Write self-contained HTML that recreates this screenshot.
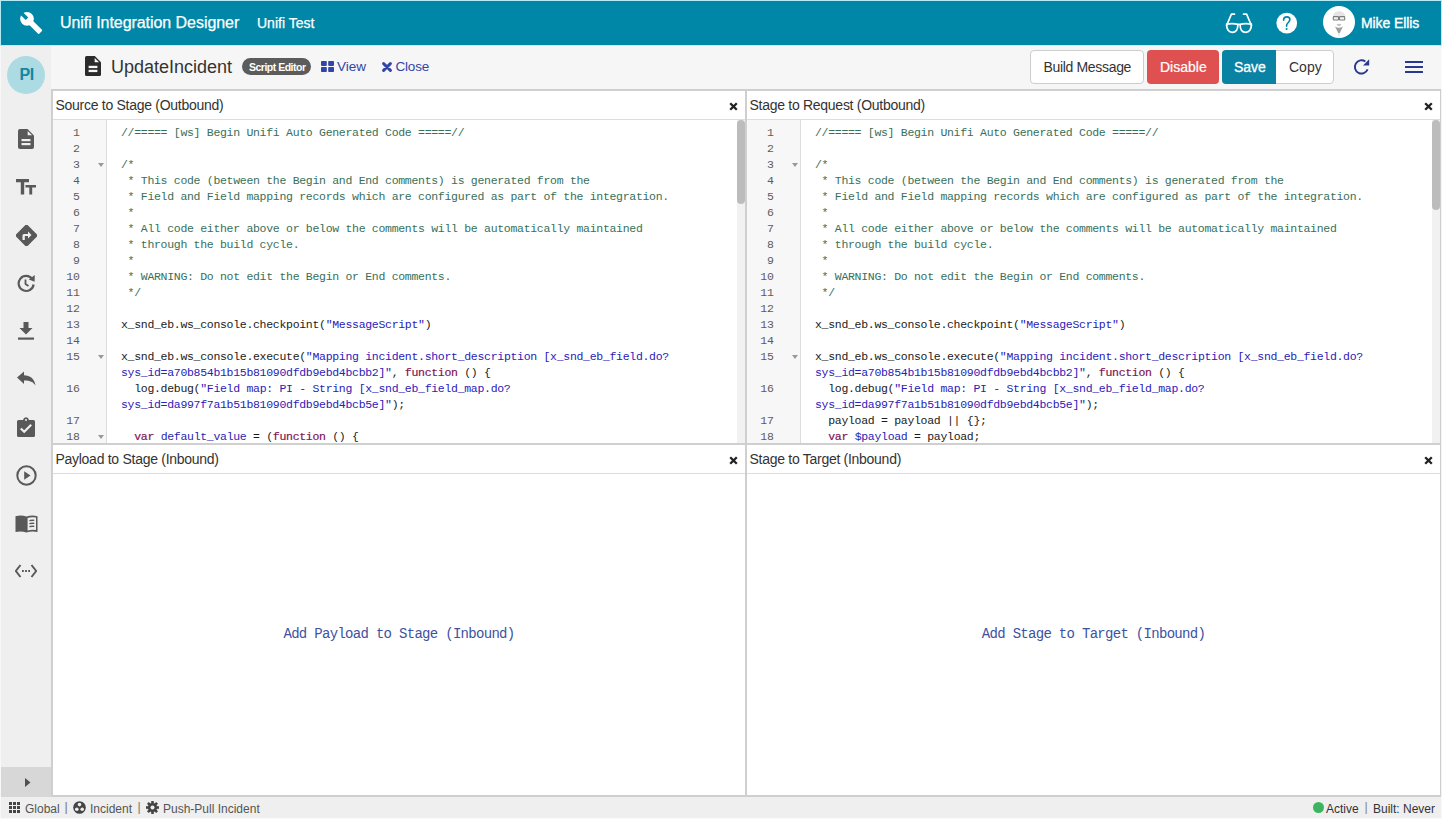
<!DOCTYPE html>
<html><head><meta charset="utf-8"><title>Unifi Integration Designer</title><style>
*{box-sizing:border-box;margin:0;padding:0}
html,body{width:1442px;height:819px;overflow:hidden;background:#f0f0f0;font-family:"Liberation Sans",sans-serif;color:#333;position:relative}
.abs{position:absolute}
.t{position:absolute;white-space:pre}
.hdr{position:absolute;left:0;right:0;top:0;height:29px;border-bottom:1px solid #ddd;font-size:14px;letter-spacing:-0.28px;line-height:29px;padding-left:2.5px;color:#333;white-space:pre}
.x{position:absolute;right:7px;top:10.5px;width:9px;height:9px}
.cm{position:absolute;left:0;right:0;top:29px;bottom:0;overflow:hidden}
.gut{position:absolute;left:0;top:0;bottom:0;width:54px;background:#f7f7f7;border-right:1px solid #ddd}
.lines{position:absolute;left:0;top:5px;right:0;font-family:"Liberation Mono",monospace;font-size:11.5px;letter-spacing:-0.3px;line-height:16px;white-space:pre}
.ln{position:absolute;left:0;width:27px;text-align:right;color:#5c5c5c;letter-spacing:0}
.code{position:absolute;left:68px;color:#1a1a1a}
.fold{position:absolute;left:45px;width:0;height:0;border-left:3px solid transparent;border-right:3px solid transparent;border-top:4px solid #999}
.c{color:#37705a}.s{color:#2b20b8}.k{color:#7f1457;-webkit-text-stroke:0.2px #7f1457}.d{color:#1f1fb0}
.sb{position:absolute;right:0;top:0;bottom:0;width:8px;background:#f1f1f1}
.th{position:absolute;left:0;top:0;width:8px;background:#bcbcbc;border-radius:4px}
.add{text-align:center;font-family:"Liberation Mono",monospace;font-size:14px;letter-spacing:-0.7px;line-height:18px;color:#3d52a0;white-space:pre}
</style></head><body>
<div class="abs" style="left:0;top:0;width:1442px;height:46px;background:#0087a7;box-shadow:inset 1px 1px 0 #b5e9f5, inset -1px 0 0 #b5e9f5, inset 0 -1px 0 #c5ecf5"></div>
<svg class="abs" style="left:16px;top:8px" width="30" height="30" viewBox="0 0 30 30">
<g transform="rotate(45 11 10.8)" fill="#fff">
<circle cx="11" cy="10.8" r="6.9"/>
<rect x="11" y="8.05" width="19.2" height="5.5" rx="0.8"/>
</g>
<g transform="rotate(45 11 10.8)"><rect x="2" y="9" width="9" height="3.6" fill="#0087a7"/></g>
</svg>
<div class="t" style="left:60px;top:15.46px;font-size:16px;line-height:16px;color:#fff;font-weight:400;letter-spacing:-0.05px;-webkit-text-stroke:0.25px #fff;">Unifi Integration Designer</div>
<div class="t" style="left:257px;top:16.15px;font-size:14px;line-height:14px;color:#fff;font-weight:400;letter-spacing:0px;-webkit-text-stroke:0.25px #fff;">Unifi Test</div>
<svg class="abs" style="left:1222px;top:10px" width="34" height="26" viewBox="0 0 34 26">
<g fill="none" stroke="#fff" stroke-width="1.7" stroke-linecap="round" stroke-linejoin="round">
<path d="M4.6 14.2 C4.4 19.6 7 22.3 10.2 22.3 C13.4 22.3 15.9 19.6 15.9 14.4 Q10.3 12.8 4.6 14.2 Z"/>
<path d="M18.1 14.4 C18.1 19.6 20.6 22.3 23.8 22.3 C27 22.3 29.6 19.6 29.4 14.2 Q23.7 12.8 18.1 14.4 Z"/>
<path d="M15.9 14.6 Q17 13.9 18.1 14.6"/>
<path d="M4.6 15.5 L9.4 4.1 L12.5 4.1"/><path d="M29.4 15.5 L24.6 4.1 L21.5 4.1"/>
</g></svg>
<svg class="abs" style="left:1276px;top:12px" width="22" height="22" viewBox="0 0 22 22">
<circle cx="10.75" cy="11.05" r="10.4" fill="#fff"/>
<path d="M7.6 8.3 C7.6 5.9 9.1 4.9 10.9 4.9 C12.7 4.9 13.9 6.1 13.9 7.6 C13.9 10 11.2 10.6 10.7 12.8 L10.6 14.2" fill="none" stroke="#0087a7" stroke-width="1.6" stroke-linecap="round"/>
<circle cx="10.6" cy="17" r="1.05" fill="#0087a7"/>
</svg>
<svg class="abs" style="left:1323px;top:6px" width="32" height="32" viewBox="0 0 32 32">
<circle cx="16" cy="16" r="16" fill="#fff"/>
<path d="M10 10.5 C10 3.5 22 3.5 22 10.5 Z" fill="#e4e4e4"/>
<rect x="10.3" y="10.6" width="5.2" height="3.4" rx="0.6" fill="#f4f4f4" stroke="#7c7c7c" stroke-width="1.1"/>
<rect x="16.5" y="10.6" width="5.2" height="3.4" rx="0.6" fill="#f4f4f4" stroke="#7c7c7c" stroke-width="1.1"/>
<path d="M13.5 18.2 Q16 17.4 18.5 18.2 L17.2 20 L14.8 20 Z" fill="#c4c4c4"/>
<path d="M12 20.5 Q16 23 20 20.5 L16.8 27 L15.2 27 Z" fill="#a0a0a0"/>
<path d="M15.2 27 L16.8 27 L16.4 31 L15.6 31 Z" fill="#e6e6e6"/>
</svg>
<div class="t" style="left:1361px;top:16.15px;font-size:14px;line-height:14px;color:#fff;font-weight:400;letter-spacing:-0.1px;-webkit-text-stroke:0.35px #fff;">Mike Ellis</div>
<div class="abs" style="left:0;top:46px;width:51px;height:751px;background:#efefef;box-shadow:inset 1px 0 0 #f8f8f8"></div>
<div class="abs" style="left:1px;top:767px;width:50px;height:30px;background:#d7d7d7"></div>
<svg class="abs" style="left:23.7px;top:777.2px" width="8" height="11" viewBox="0 0 8 11"><path d="M1 1 L6.5 5.5 L1 10 Z" fill="#505050"/></svg>
<div class="abs" style="left:7px;top:56px;width:38px;height:38px;border-radius:50%;background:#acdbe4"></div>
<div class="t" style="left:19.5px;top:67.46px;font-size:16px;line-height:16px;color:#1585a1;font-weight:700;letter-spacing:-0.3px;">PI</div>
<svg class="abs" style="left:18.0px;top:129.0px" width="16" height="20" viewBox="0 0 16 20"><path d="M2 0 L9.5 0 L16 6.5 L16 18 Q16 20 14 20 L2 20 Q0 20 0 18 L0 2 Q0 0 2 0 Z" fill="#595959"/><path d="M9.7 1.9 L14.1 6.3 L9.7 6.3 Z" fill="#efefef"/><rect x="3.5" y="10" width="9" height="2.2" fill="#efefef"/><rect x="3.5" y="14" width="9" height="2.2" fill="#efefef"/></svg>
<svg class="abs" style="left:16.0px;top:178.5px" width="20" height="16" viewBox="0 0 20 16"><path d="M0 0 H13 V3.2 H8.2 V15.5 H4.8 V3.2 H0 Z" fill="#595959"/><path d="M9.5 6 H20 V8.6 H16.2 V15.5 H13.3 V8.6 H9.5 Z" fill="#595959"/></svg>
<svg class="abs" style="left:15.5px;top:224.5px" width="21" height="21" viewBox="0 0 21 21"><path d="M10.5 0 L21 10.5 L10.5 21 L0 10.5 Z" fill="#595959" stroke="#595959" stroke-linejoin="round" stroke-width="1.5"/><path d="M6.5 15 V10.5 Q6.5 9 8 9 H12 V6.5 L15.5 10 L12 13.5 V11 H8.8 V15 Z" fill="#efefef"/></svg>
<svg class="abs" style="left:16.0px;top:273.0px" width="20" height="20" viewBox="0 0 20 20"><path d="M16.2 6.0 A7.5 7.5 0 1 0 17.6 11.5" fill="none" stroke="#595959" stroke-width="2.2"/><path d="M12.8 6.6 L18.8 2.0 L18.6 8.8 Z" fill="#595959"/><path d="M9.5 6.5 V11 L12.5 13" fill="none" stroke="#595959" stroke-width="1.8"/></svg>
<svg class="abs" style="left:18.0px;top:322.0px" width="16" height="18" viewBox="0 0 16 18"><path d="M5.5 0 H10.5 V6 H14.5 L8 12.5 L1.5 6 H5.5 Z" fill="#595959"/><rect x="0" y="15.5" width="16" height="2.2" fill="#595959"/></svg>
<svg class="abs" style="left:16.5px;top:371.0px" width="19" height="16" viewBox="0 0 19 16"><path d="M0 6.5 L7 0.5 V4.2 C13 4.2 17.5 7.5 18.5 14.5 C16 11 13 9.5 7 9.6 V13 Z" fill="#595959"/></svg>
<svg class="abs" style="left:17.0px;top:417.0px" width="18" height="20" viewBox="0 0 18 20"><path d="M1.5 3 H6 Q6.5 0.3 9 0.3 Q11.5 0.3 12 3 H16.5 Q18 3 18 4.5 V18.5 Q18 20 16.5 20 H1.5 Q0 20 0 18.5 V4.5 Q0 3 1.5 3 Z" fill="#595959"/><circle cx="9" cy="3" r="1" fill="#efefef"/><path d="M3.8 11.5 L7.2 14.8 L14.2 7.8" fill="none" stroke="#efefef" stroke-width="2.2"/></svg>
<svg class="abs" style="left:15.5px;top:464.5px" width="21" height="21" viewBox="0 0 21 21"><circle cx="10.5" cy="10.5" r="9.2" fill="none" stroke="#595959" stroke-width="2"/><path d="M8.2 6.2 L14.5 10.5 L8.2 14.8 Z" fill="#595959"/></svg>
<svg class="abs" style="left:14.5px;top:514.5px" width="23" height="18" viewBox="0 0 23 18"><path d="M0.5 1.3 Q6 -0.5 11.5 1.6 Q17 -0.5 22.5 1.3 V17 Q17 15.6 11.5 17.4 Q6 15.6 0.5 17 Z" fill="#595959"/><path d="M12.6 2.9 Q16.8 1.6 21 2.6 V15 Q16.8 14.3 12.6 15.5 Z" fill="#efefef"/><path d="M14.4 5.6 Q16.8 5 19.3 5.4 M14.4 8.6 Q16.8 8 19.3 8.4 M14.4 11.6 Q16.8 11 19.3 11.4" fill="none" stroke="#595959" stroke-width="1.3"/></svg>
<svg class="abs" style="left:15.0px;top:564.0px" width="22" height="14" viewBox="0 0 22 14"><path d="M5.5 1 L0.8 7 L5.5 13 M16.5 1 L21.2 7 L16.5 13" fill="none" stroke="#595959" stroke-width="2"/><rect x="7" y="6" width="1.8" height="2" fill="#595959"/><rect x="10.1" y="6" width="1.8" height="2" fill="#595959"/><rect x="13.2" y="6" width="1.8" height="2" fill="#595959"/></svg>
<div class="abs" style="left:51px;top:46px;width:1391px;height:43px;background:#f6f6f6;box-shadow:inset -1px 0 0 #fbfbfb"></div>
<svg class="abs" style="left:85px;top:56px" width="16" height="20" viewBox="0 0 16 20"><path d="M1.5 0 L9.8 0 L16 6.2 L16 18.5 Q16 20 14.5 20 L1.5 20 Q0 20 0 18.5 L0 1.5 Q0 0 1.5 0 Z" fill="#2b2b2b"/><path d="M9.7 1.9 L14.1 6.3 L9.7 6.3 Z" fill="#f6f6f6"/><rect x="3.6" y="9.8" width="8.8" height="2.3" fill="#f6f6f6"/><rect x="3.6" y="13.8" width="8.8" height="2.3" fill="#f6f6f6"/></svg>
<div class="t" style="left:111px;top:58.26px;font-size:18px;line-height:18px;color:#333;font-weight:400;letter-spacing:0px;">UpdateIncident</div>
<div class="abs" style="left:242px;top:58px;width:69px;height:17px;border-radius:8.5px;background:#5c5c5c"></div>
<div class="t" style="left:249px;top:61.91px;font-size:10.5px;line-height:10.5px;color:#fff;font-weight:700;letter-spacing:-0.5px;">Script Editor</div>
<svg class="abs" style="left:321px;top:61px" width="13" height="11" viewBox="0 0 13 11"><rect x="0" y="0" width="5.8" height="4.9" rx="0.8" fill="#3145a8"/><rect x="7.2" y="0" width="5.8" height="4.9" rx="0.8" fill="#3145a8"/><rect x="0" y="6.1" width="5.8" height="4.9" rx="0.8" fill="#3145a8"/><rect x="7.2" y="6.1" width="5.8" height="4.9" rx="0.8" fill="#3145a8"/></svg>
<div class="t" style="left:337px;top:60.37px;font-size:13.5px;line-height:13.5px;color:#3145a8;font-weight:400;letter-spacing:0px;">View</div>
<svg class="abs" style="left:382px;top:62px" width="10" height="10" viewBox="0 0 10 10"><path d="M1.6 1.6 L8.4 8.4 M8.4 1.6 L1.6 8.4" stroke="#3145a8" stroke-width="2.9" stroke-linecap="round"/></svg>
<div class="t" style="left:395.5px;top:60.07px;font-size:13.5px;line-height:13.5px;color:#3145a8;font-weight:400;letter-spacing:-0.2px;">Close</div>
<div class="abs" style="left:1030px;top:50px;width:114px;height:34px;background:#fff;border:1px solid #cdcdcd;border-radius:4px"></div>
<div class="t" style="left:1043.5px;top:60.45px;font-size:14px;line-height:14px;color:#333;font-weight:400;letter-spacing:-0.33px;">Build Message</div>
<div class="abs" style="left:1147px;top:50px;width:72px;height:34px;background:#df5151;border:none;border-radius:4px"></div>
<div class="t" style="left:1160px;top:60.45px;font-size:14px;line-height:14px;color:#fff;font-weight:400;letter-spacing:0px;-webkit-text-stroke:0.2px #fff;">Disable</div>
<div class="abs" style="left:1222px;top:50px;width:112px;height:34px;background:#fff;border:1px solid #cdcdcd;border-radius:4px"></div>
<div class="abs" style="left:1222px;top:50px;width:54px;height:34px;background:#0a82a3;border-radius:4px 0 0 4px"></div>
<div class="t" style="left:1234px;top:60.45px;font-size:14px;line-height:14px;color:#fff;font-weight:400;letter-spacing:0px;-webkit-text-stroke:0.3px #fff;">Save</div>
<div class="t" style="left:1289px;top:60.45px;font-size:14px;line-height:14px;color:#333;font-weight:400;letter-spacing:0px;">Copy</div>
<svg class="abs" style="left:1352px;top:58px" width="19" height="18" viewBox="0 0 19 18"><path d="M13.4 3.6 A6.6 6.6 0 1 0 15.6 11.4" fill="none" stroke="#2a3890" stroke-width="1.9"/><path d="M11.0 7.5 L17.2 7.5 L17.2 1.2 Z" fill="#2a3890"/></svg>
<svg class="abs" style="left:1405px;top:60px" width="18" height="14" viewBox="0 0 18 14"><rect x="0" y="1" width="18" height="2" rx="0.3" fill="#2a3890"/><rect x="0" y="6" width="18" height="2" rx="0.3" fill="#2a3890"/><rect x="0" y="11" width="18" height="2" rx="0.3" fill="#2a3890"/></svg>
<div class="abs" style="left:51px;top:89px;width:1391px;height:708px;background:#cfcfcf"></div>
<div class="abs" style="left:1441px;top:89px;width:1px;height:708px;background:#f4f4f4"></div>
<div class="abs" style="left:53px;top:91px;width:692px;height:352px;background:#fff;overflow:hidden"><div class="hdr">Source to Stage (Outbound)</div><svg class="x" viewBox="0 0 9 9"><path d="M1.2 1.2 L7.8 7.8 M7.8 1.2 L1.2 7.8" stroke="#222" stroke-width="2.3"/></svg><div class="cm"><div class="gut"></div><div class="lines"><div class="ln" style="top:0px">1</div><div class="ln" style="top:16px">2</div><div class="ln" style="top:32px">3</div><div class="ln" style="top:48px">4</div><div class="ln" style="top:64px">5</div><div class="ln" style="top:80px">6</div><div class="ln" style="top:96px">7</div><div class="ln" style="top:112px">8</div><div class="ln" style="top:128px">9</div><div class="ln" style="top:144px">10</div><div class="ln" style="top:160px">11</div><div class="ln" style="top:176px">12</div><div class="ln" style="top:192px">13</div><div class="ln" style="top:208px">14</div><div class="ln" style="top:224px">15</div><div class="ln" style="top:256px">16</div><div class="ln" style="top:288px">17</div><div class="ln" style="top:304px">18</div><div class="code" style="top:0px"><span class="c">//===== [ws] Begin Unifi Auto Generated Code =====//</span></div><div class="code" style="top:16px"></div><div class="code" style="top:32px"><span class="c">/*</span></div><div class="code" style="top:48px"><span class="c"> * This code (between the Begin and End comments) is generated from the</span></div><div class="code" style="top:64px"><span class="c"> * Field and Field mapping records which are configured as part of the integration.</span></div><div class="code" style="top:80px"><span class="c"> *</span></div><div class="code" style="top:96px"><span class="c"> * All code either above or below the comments will be automatically maintained</span></div><div class="code" style="top:112px"><span class="c"> * through the build cycle.</span></div><div class="code" style="top:128px"><span class="c"> *</span></div><div class="code" style="top:144px"><span class="c"> * WARNING: Do not edit the Begin or End comments.</span></div><div class="code" style="top:160px"><span class="c"> */</span></div><div class="code" style="top:176px"></div><div class="code" style="top:192px">x_snd_eb.ws_console.checkpoint(<span class="s">&quot;MessageScript&quot;</span>)</div><div class="code" style="top:208px"></div><div class="code" style="top:224px">x_snd_eb.ws_console.execute(<span class="s">&quot;Mapping incident.short_description [x_snd_eb_field.do?
sys_id=a70b854b1b15b81090dfdb9ebd4bcbb2]&quot;</span>, <span class="k">function</span> () {</div><div class="code" style="top:256px">  log.debug(<span class="s">&quot;Field map: PI - String [x_snd_eb_field_map.do?
sys_id=da997f7a1b51b81090dfdb9ebd4bcb5e]&quot;</span>);</div><div class="code" style="top:288px"></div><div class="code" style="top:304px">  <span class="k">var</span> <span class="d">default_value</span> = (<span class="k">function</span> () {</div><div class="fold" style="top:38px"></div><div class="fold" style="top:230px"></div><div class="fold" style="top:310px"></div></div><div class="sb"><div class="th" style="height:84px"></div></div></div></div>
<div class="abs" style="left:747px;top:91px;width:693px;height:352px;background:#fff;overflow:hidden"><div class="hdr">Stage to Request (Outbound)</div><svg class="x" viewBox="0 0 9 9"><path d="M1.2 1.2 L7.8 7.8 M7.8 1.2 L1.2 7.8" stroke="#222" stroke-width="2.3"/></svg><div class="cm"><div class="gut"></div><div class="lines"><div class="ln" style="top:0px">1</div><div class="ln" style="top:16px">2</div><div class="ln" style="top:32px">3</div><div class="ln" style="top:48px">4</div><div class="ln" style="top:64px">5</div><div class="ln" style="top:80px">6</div><div class="ln" style="top:96px">7</div><div class="ln" style="top:112px">8</div><div class="ln" style="top:128px">9</div><div class="ln" style="top:144px">10</div><div class="ln" style="top:160px">11</div><div class="ln" style="top:176px">12</div><div class="ln" style="top:192px">13</div><div class="ln" style="top:208px">14</div><div class="ln" style="top:224px">15</div><div class="ln" style="top:256px">16</div><div class="ln" style="top:288px">17</div><div class="ln" style="top:304px">18</div><div class="code" style="top:0px"><span class="c">//===== [ws] Begin Unifi Auto Generated Code =====//</span></div><div class="code" style="top:16px"></div><div class="code" style="top:32px"><span class="c">/*</span></div><div class="code" style="top:48px"><span class="c"> * This code (between the Begin and End comments) is generated from the</span></div><div class="code" style="top:64px"><span class="c"> * Field and Field mapping records which are configured as part of the integration.</span></div><div class="code" style="top:80px"><span class="c"> *</span></div><div class="code" style="top:96px"><span class="c"> * All code either above or below the comments will be automatically maintained</span></div><div class="code" style="top:112px"><span class="c"> * through the build cycle.</span></div><div class="code" style="top:128px"><span class="c"> *</span></div><div class="code" style="top:144px"><span class="c"> * WARNING: Do not edit the Begin or End comments.</span></div><div class="code" style="top:160px"><span class="c"> */</span></div><div class="code" style="top:176px"></div><div class="code" style="top:192px">x_snd_eb.ws_console.checkpoint(<span class="s">&quot;MessageScript&quot;</span>)</div><div class="code" style="top:208px"></div><div class="code" style="top:224px">x_snd_eb.ws_console.execute(<span class="s">&quot;Mapping incident.short_description [x_snd_eb_field.do?
sys_id=a70b854b1b15b81090dfdb9ebd4bcbb2]&quot;</span>, <span class="k">function</span> () {</div><div class="code" style="top:256px">  log.debug(<span class="s">&quot;Field map: PI - String [x_snd_eb_field_map.do?
sys_id=da997f7a1b51b81090dfdb9ebd4bcb5e]&quot;</span>);</div><div class="code" style="top:288px">  payload = payload || {};</div><div class="code" style="top:304px">  <span class="k">var</span> <span class="d">$payload</span> = payload;</div><div class="fold" style="top:38px"></div><div class="fold" style="top:230px"></div></div><div class="sb"><div class="th" style="height:90px"></div></div></div></div>
<div class="abs" style="left:53px;top:445px;width:692px;height:350px;background:#fff;overflow:hidden"><div class="hdr">Payload to Stage (Inbound)</div><svg class="x" viewBox="0 0 9 9"><path d="M1.2 1.2 L7.8 7.8 M7.8 1.2 L1.2 7.8" stroke="#222" stroke-width="2.3"/></svg></div>
<div class="abs" style="left:747px;top:445px;width:693px;height:350px;background:#fff;overflow:hidden"><div class="hdr">Stage to Target (Inbound)</div><svg class="x" viewBox="0 0 9 9"><path d="M1.2 1.2 L7.8 7.8 M7.8 1.2 L1.2 7.8" stroke="#222" stroke-width="2.3"/></svg></div>
<div class="abs add" style="left:53px;width:692px;top:625px">Add Payload to Stage (Inbound)</div>
<div class="abs add" style="left:747px;width:693px;top:625px">Add Stage to Target (Inbound)</div>
<div class="abs" style="left:0;top:797px;width:1442px;height:22px;background:#efefef;box-shadow:inset 1px 0 0 #f8f8f8, inset 0 -1px 0 #f9f9f9, inset -1px 0 0 #f8f8f8"></div>
<svg class="abs" style="left:9px;top:802px" width="11" height="11" viewBox="0 0 11 11"><rect x="0" y="0" width="3" height="3" fill="#454545"/><rect x="4" y="0" width="3" height="3" fill="#454545"/><rect x="8" y="0" width="3" height="3" fill="#454545"/><rect x="0" y="4" width="3" height="3" fill="#454545"/><rect x="4" y="4" width="3" height="3" fill="#454545"/><rect x="8" y="4" width="3" height="3" fill="#454545"/><rect x="0" y="8" width="3" height="3" fill="#454545"/><rect x="4" y="8" width="3" height="3" fill="#454545"/><rect x="8" y="8" width="3" height="3" fill="#454545"/></svg>
<div class="t" style="left:25px;top:803.14px;font-size:12px;line-height:12px;color:#555;font-weight:400;letter-spacing:0px;">Global</div>
<div class="t" style="left:64.5px;top:801.42px;font-size:12.5px;line-height:12.5px;color:#777;font-weight:400;letter-spacing:0px;">|</div>
<svg class="abs" style="left:73px;top:801px" width="13" height="13" viewBox="0 0 13 13"><circle cx="6.5" cy="6.5" r="6.3" fill="#454545"/><circle cx="6.5" cy="3.6" r="1.8" fill="#efefef"/><circle cx="3.8" cy="8.3" r="1.8" fill="#efefef"/><circle cx="9.2" cy="8.3" r="1.8" fill="#efefef"/></svg>
<div class="t" style="left:90px;top:803.14px;font-size:12px;line-height:12px;color:#555;font-weight:400;letter-spacing:0px;">Incident</div>
<div class="t" style="left:137.5px;top:801.42px;font-size:12.5px;line-height:12.5px;color:#777;font-weight:400;letter-spacing:0px;">|</div>
<svg class="abs" style="left:146px;top:801px" width="13" height="13" viewBox="0 0 13 13"><g fill="#454545"><circle cx="6.5" cy="6.5" r="4.6"/><rect x="5.2" y="0" width="2.6" height="3" transform="rotate(0 6.5 6.5)"/><rect x="5.2" y="0" width="2.6" height="3" transform="rotate(45 6.5 6.5)"/><rect x="5.2" y="0" width="2.6" height="3" transform="rotate(90 6.5 6.5)"/><rect x="5.2" y="0" width="2.6" height="3" transform="rotate(135 6.5 6.5)"/><rect x="5.2" y="0" width="2.6" height="3" transform="rotate(180 6.5 6.5)"/><rect x="5.2" y="0" width="2.6" height="3" transform="rotate(225 6.5 6.5)"/><rect x="5.2" y="0" width="2.6" height="3" transform="rotate(270 6.5 6.5)"/><rect x="5.2" y="0" width="2.6" height="3" transform="rotate(315 6.5 6.5)"/></g><circle cx="6.5" cy="6.5" r="2" fill="#efefef"/></svg>
<div class="t" style="left:163px;top:803.14px;font-size:12px;line-height:12px;color:#555;font-weight:400;letter-spacing:0px;">Push-Pull Incident</div>
<div class="abs" style="left:1313px;top:802px;width:11px;height:11px;border-radius:50%;background:#3db460"></div>
<div class="t" style="left:1326px;top:803.14px;font-size:12px;line-height:12px;color:#333;font-weight:400;letter-spacing:0px;">Active</div>
<div class="t" style="left:1364.5px;top:801.42px;font-size:12.5px;line-height:12.5px;color:#888;font-weight:400;letter-spacing:0px;">|</div>
<div class="t" style="left:1373px;top:803.14px;font-size:12px;line-height:12px;color:#333;font-weight:400;letter-spacing:0px;">Built: Never</div>
</body></html>
